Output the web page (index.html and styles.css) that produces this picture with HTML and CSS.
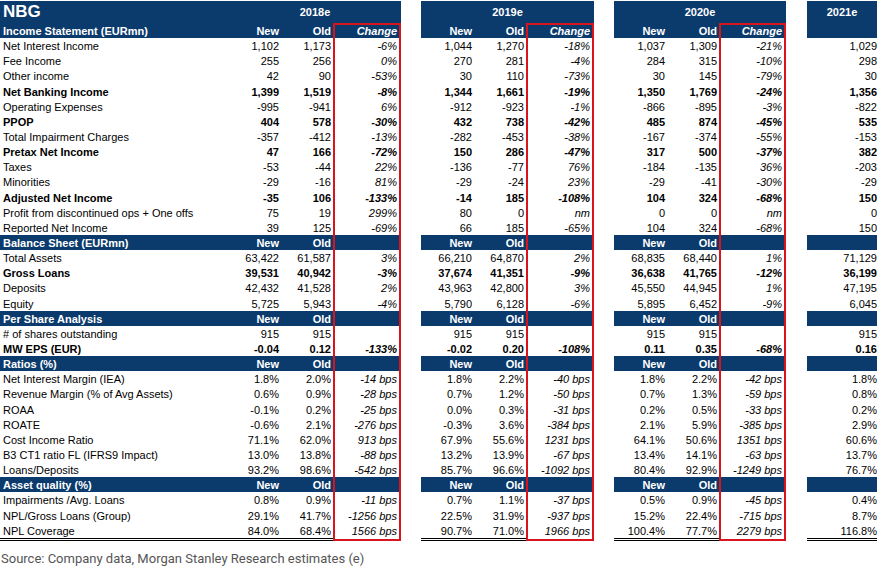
FILE: index.html
```html
<!DOCTYPE html>
<html lang="en">
<head>
<meta charset="utf-8">
<title>NBG estimates</title>
<link rel="stylesheet" href="styles.css">
</head>
<body>
<div class="sheet">
  <div class="row top">
    <div class="c lbl title">NBG</div>
    <div class="c yr s3">2018e</div><div class="gap"></div>
    <div class="c yr s3">2019e</div><div class="gap"></div>
    <div class="c yr s3">2020e</div><div class="gap"></div>
    <div class="c yr">2021e</div>
  </div>
  <div class="row sec first">
    <div class="c lbl">Income Statement (EURmn)</div>
    <div class="c">New</div><div class="c">Old</div><div class="c chg">Change</div><div class="gap"></div>
    <div class="c">New</div><div class="c">Old</div><div class="c chg">Change</div><div class="gap"></div>
    <div class="c">New</div><div class="c">Old</div><div class="c chg">Change</div><div class="gap"></div>
    <div class="c"></div>
  </div>
  <div class="row"><div class="c lbl">Net Interest Income</div><div class="c">1,102</div><div class="c">1,173</div><div class="c chg">-6%</div><div class="gap"></div><div class="c">1,044</div><div class="c">1,270</div><div class="c chg">-18%</div><div class="gap"></div><div class="c">1,037</div><div class="c">1,309</div><div class="c chg">-21%</div><div class="gap"></div><div class="c">1,029</div></div>
  <div class="row"><div class="c lbl">Fee Income</div><div class="c">255</div><div class="c">256</div><div class="c chg">0%</div><div class="gap"></div><div class="c">270</div><div class="c">281</div><div class="c chg">-4%</div><div class="gap"></div><div class="c">284</div><div class="c">315</div><div class="c chg">-10%</div><div class="gap"></div><div class="c">298</div></div>
  <div class="row"><div class="c lbl">Other income</div><div class="c">42</div><div class="c">90</div><div class="c chg">-53%</div><div class="gap"></div><div class="c">30</div><div class="c">110</div><div class="c chg">-73%</div><div class="gap"></div><div class="c">30</div><div class="c">145</div><div class="c chg">-79%</div><div class="gap"></div><div class="c">30</div></div>
  <div class="row b"><div class="c lbl">Net Banking Income</div><div class="c">1,399</div><div class="c">1,519</div><div class="c chg">-8%</div><div class="gap"></div><div class="c">1,344</div><div class="c">1,661</div><div class="c chg">-19%</div><div class="gap"></div><div class="c">1,350</div><div class="c">1,769</div><div class="c chg">-24%</div><div class="gap"></div><div class="c">1,356</div></div>
  <div class="row"><div class="c lbl">Operating Expenses</div><div class="c">-995</div><div class="c">-941</div><div class="c chg">6%</div><div class="gap"></div><div class="c">-912</div><div class="c">-923</div><div class="c chg">-1%</div><div class="gap"></div><div class="c">-866</div><div class="c">-895</div><div class="c chg">-3%</div><div class="gap"></div><div class="c">-822</div></div>
  <div class="row b"><div class="c lbl">PPOP</div><div class="c">404</div><div class="c">578</div><div class="c chg">-30%</div><div class="gap"></div><div class="c">432</div><div class="c">738</div><div class="c chg">-42%</div><div class="gap"></div><div class="c">485</div><div class="c">874</div><div class="c chg">-45%</div><div class="gap"></div><div class="c">535</div></div>
  <div class="row"><div class="c lbl">Total Impairment Charges</div><div class="c">-357</div><div class="c">-412</div><div class="c chg">-13%</div><div class="gap"></div><div class="c">-282</div><div class="c">-453</div><div class="c chg">-38%</div><div class="gap"></div><div class="c">-167</div><div class="c">-374</div><div class="c chg">-55%</div><div class="gap"></div><div class="c">-153</div></div>
  <div class="row b"><div class="c lbl">Pretax Net Income</div><div class="c">47</div><div class="c">166</div><div class="c chg">-72%</div><div class="gap"></div><div class="c">150</div><div class="c">286</div><div class="c chg">-47%</div><div class="gap"></div><div class="c">317</div><div class="c">500</div><div class="c chg">-37%</div><div class="gap"></div><div class="c">382</div></div>
  <div class="row"><div class="c lbl">Taxes</div><div class="c">-53</div><div class="c">-44</div><div class="c chg">22%</div><div class="gap"></div><div class="c">-136</div><div class="c">-77</div><div class="c chg">76%</div><div class="gap"></div><div class="c">-184</div><div class="c">-135</div><div class="c chg">36%</div><div class="gap"></div><div class="c">-203</div></div>
  <div class="row"><div class="c lbl">Minorities</div><div class="c">-29</div><div class="c">-16</div><div class="c chg">81%</div><div class="gap"></div><div class="c">-29</div><div class="c">-24</div><div class="c chg">23%</div><div class="gap"></div><div class="c">-29</div><div class="c">-41</div><div class="c chg">-30%</div><div class="gap"></div><div class="c">-29</div></div>
  <div class="row b"><div class="c lbl">Adjusted Net Income</div><div class="c">-35</div><div class="c">106</div><div class="c chg">-133%</div><div class="gap"></div><div class="c">-14</div><div class="c">185</div><div class="c chg">-108%</div><div class="gap"></div><div class="c">104</div><div class="c">324</div><div class="c chg">-68%</div><div class="gap"></div><div class="c">150</div></div>
  <div class="row"><div class="c lbl">Profit from discontinued ops + One offs</div><div class="c">75</div><div class="c">19</div><div class="c chg">299%</div><div class="gap"></div><div class="c">80</div><div class="c">0</div><div class="c chg">nm</div><div class="gap"></div><div class="c">0</div><div class="c">0</div><div class="c chg">nm</div><div class="gap"></div><div class="c">0</div></div>
  <div class="row"><div class="c lbl">Reported Net Income</div><div class="c">39</div><div class="c">125</div><div class="c chg">-69%</div><div class="gap"></div><div class="c">66</div><div class="c">185</div><div class="c chg">-65%</div><div class="gap"></div><div class="c">104</div><div class="c">324</div><div class="c chg">-68%</div><div class="gap"></div><div class="c">150</div></div>

  <div class="row sec">
    <div class="c lbl">Balance Sheet (EURmn)</div>
    <div class="c">New</div><div class="c">Old</div><div class="c chg"></div><div class="gap"></div>
    <div class="c">New</div><div class="c">Old</div><div class="c chg"></div><div class="gap"></div>
    <div class="c">New</div><div class="c">Old</div><div class="c chg"></div><div class="gap"></div>
    <div class="c"></div>
  </div>
  <div class="row"><div class="c lbl">Total Assets</div><div class="c">63,422</div><div class="c">61,587</div><div class="c chg">3%</div><div class="gap"></div><div class="c">66,210</div><div class="c">64,870</div><div class="c chg">2%</div><div class="gap"></div><div class="c">68,835</div><div class="c">68,440</div><div class="c chg">1%</div><div class="gap"></div><div class="c">71,129</div></div>
  <div class="row b"><div class="c lbl">Gross Loans</div><div class="c">39,531</div><div class="c">40,942</div><div class="c chg">-3%</div><div class="gap"></div><div class="c">37,674</div><div class="c">41,351</div><div class="c chg">-9%</div><div class="gap"></div><div class="c">36,638</div><div class="c">41,765</div><div class="c chg">-12%</div><div class="gap"></div><div class="c">36,199</div></div>
  <div class="row"><div class="c lbl">Deposits</div><div class="c">42,432</div><div class="c">41,528</div><div class="c chg">2%</div><div class="gap"></div><div class="c">43,963</div><div class="c">42,800</div><div class="c chg">3%</div><div class="gap"></div><div class="c">45,550</div><div class="c">44,945</div><div class="c chg">1%</div><div class="gap"></div><div class="c">47,195</div></div>
  <div class="row"><div class="c lbl">Equity</div><div class="c">5,725</div><div class="c">5,943</div><div class="c chg">-4%</div><div class="gap"></div><div class="c">5,790</div><div class="c">6,128</div><div class="c chg">-6%</div><div class="gap"></div><div class="c">5,895</div><div class="c">6,452</div><div class="c chg">-9%</div><div class="gap"></div><div class="c">6,045</div></div>

  <div class="row sec">
    <div class="c lbl">Per Share Analysis</div>
    <div class="c">New</div><div class="c">Old</div><div class="c chg"></div><div class="gap"></div>
    <div class="c">New</div><div class="c">Old</div><div class="c chg"></div><div class="gap"></div>
    <div class="c">New</div><div class="c">Old</div><div class="c chg"></div><div class="gap"></div>
    <div class="c"></div>
  </div>
  <div class="row"><div class="c lbl"># of shares outstanding</div><div class="c">915</div><div class="c">915</div><div class="c chg"></div><div class="gap"></div><div class="c">915</div><div class="c">915</div><div class="c chg"></div><div class="gap"></div><div class="c">915</div><div class="c">915</div><div class="c chg"></div><div class="gap"></div><div class="c">915</div></div>
  <div class="row b"><div class="c lbl">MW EPS (EUR)</div><div class="c">-0.04</div><div class="c">0.12</div><div class="c chg">-133%</div><div class="gap"></div><div class="c">-0.02</div><div class="c">0.20</div><div class="c chg">-108%</div><div class="gap"></div><div class="c">0.11</div><div class="c">0.35</div><div class="c chg">-68%</div><div class="gap"></div><div class="c">0.16</div></div>

  <div class="row sec">
    <div class="c lbl">Ratios (%)</div>
    <div class="c">New</div><div class="c">Old</div><div class="c chg"></div><div class="gap"></div>
    <div class="c">New</div><div class="c">Old</div><div class="c chg"></div><div class="gap"></div>
    <div class="c">New</div><div class="c">Old</div><div class="c chg"></div><div class="gap"></div>
    <div class="c"></div>
  </div>
  <div class="row"><div class="c lbl">Net Interest Margin (IEA)</div><div class="c">1.8%</div><div class="c">2.0%</div><div class="c chg">-14 bps</div><div class="gap"></div><div class="c">1.8%</div><div class="c">2.2%</div><div class="c chg">-40 bps</div><div class="gap"></div><div class="c">1.8%</div><div class="c">2.2%</div><div class="c chg">-42 bps</div><div class="gap"></div><div class="c">1.8%</div></div>
  <div class="row"><div class="c lbl">Revenue Margin (% of Avg Assets)</div><div class="c">0.6%</div><div class="c">0.9%</div><div class="c chg">-28 bps</div><div class="gap"></div><div class="c">0.7%</div><div class="c">1.2%</div><div class="c chg">-50 bps</div><div class="gap"></div><div class="c">0.7%</div><div class="c">1.3%</div><div class="c chg">-59 bps</div><div class="gap"></div><div class="c">0.8%</div></div>
  <div class="row"><div class="c lbl">ROAA</div><div class="c">-0.1%</div><div class="c">0.2%</div><div class="c chg">-25 bps</div><div class="gap"></div><div class="c">0.0%</div><div class="c">0.3%</div><div class="c chg">-31 bps</div><div class="gap"></div><div class="c">0.2%</div><div class="c">0.5%</div><div class="c chg">-33 bps</div><div class="gap"></div><div class="c">0.2%</div></div>
  <div class="row"><div class="c lbl">ROATE</div><div class="c">-0.6%</div><div class="c">2.1%</div><div class="c chg">-276 bps</div><div class="gap"></div><div class="c">-0.3%</div><div class="c">3.6%</div><div class="c chg">-384 bps</div><div class="gap"></div><div class="c">2.1%</div><div class="c">5.9%</div><div class="c chg">-385 bps</div><div class="gap"></div><div class="c">2.9%</div></div>
  <div class="row"><div class="c lbl">Cost Income Ratio</div><div class="c">71.1%</div><div class="c">62.0%</div><div class="c chg">913 bps</div><div class="gap"></div><div class="c">67.9%</div><div class="c">55.6%</div><div class="c chg">1231 bps</div><div class="gap"></div><div class="c">64.1%</div><div class="c">50.6%</div><div class="c chg">1351 bps</div><div class="gap"></div><div class="c">60.6%</div></div>
  <div class="row"><div class="c lbl">B3 CT1 ratio FL (IFRS9 Impact)</div><div class="c">13.0%</div><div class="c">13.8%</div><div class="c chg">-88 bps</div><div class="gap"></div><div class="c">13.2%</div><div class="c">13.9%</div><div class="c chg">-67 bps</div><div class="gap"></div><div class="c">13.4%</div><div class="c">14.1%</div><div class="c chg">-63 bps</div><div class="gap"></div><div class="c">13.7%</div></div>
  <div class="row"><div class="c lbl">Loans/Deposits</div><div class="c">93.2%</div><div class="c">98.6%</div><div class="c chg">-542 bps</div><div class="gap"></div><div class="c">85.7%</div><div class="c">96.6%</div><div class="c chg">-1092 bps</div><div class="gap"></div><div class="c">80.4%</div><div class="c">92.9%</div><div class="c chg">-1249 bps</div><div class="gap"></div><div class="c">76.7%</div></div>

  <div class="row sec">
    <div class="c lbl">Asset quality (%)</div>
    <div class="c">New</div><div class="c">Old</div><div class="c chg"></div><div class="gap"></div>
    <div class="c">New</div><div class="c">Old</div><div class="c chg"></div><div class="gap"></div>
    <div class="c">New</div><div class="c">Old</div><div class="c chg"></div><div class="gap"></div>
    <div class="c"></div>
  </div>
  <div class="row"><div class="c lbl">Impairments /Avg. Loans</div><div class="c">0.8%</div><div class="c">0.9%</div><div class="c chg">-11 bps</div><div class="gap"></div><div class="c">0.7%</div><div class="c">1.1%</div><div class="c chg">-37 bps</div><div class="gap"></div><div class="c">0.5%</div><div class="c">0.9%</div><div class="c chg">-45 bps</div><div class="gap"></div><div class="c">0.4%</div></div>
  <div class="row"><div class="c lbl">NPL/Gross Loans (Group)</div><div class="c">29.1%</div><div class="c">41.7%</div><div class="c chg">-1256 bps</div><div class="gap"></div><div class="c">22.5%</div><div class="c">31.9%</div><div class="c chg">-937 bps</div><div class="gap"></div><div class="c">15.2%</div><div class="c">22.4%</div><div class="c chg">-715 bps</div><div class="gap"></div><div class="c">8.7%</div></div>
  <div class="row last"><div class="c lbl">NPL Coverage</div><div class="c">84.0%</div><div class="c">68.4%</div><div class="c chg">1566 bps</div><div class="gap"></div><div class="c">90.7%</div><div class="c">71.0%</div><div class="c chg">1966 bps</div><div class="gap"></div><div class="c">100.4%</div><div class="c">77.7%</div><div class="c chg">2279 bps</div><div class="gap"></div><div class="c">116.8%</div></div>
</div>
<p class="source">Source: Company data, Morgan Stanley Research estimates (e)</p>
</body>
</html>
```

FILE: styles.css
```css
* { box-sizing: border-box; }

html, body {
  margin: 0;
  padding: 0;
  background: #fff;
  overflow: hidden;
}

body {
  font-family: "Liberation Sans", Arial, sans-serif;
  font-size: 11px;
  color: #000;
}

.sheet {
  display: flex;
  flex-direction: column;
  padding-top: 1px;
}

.row {
  display: grid;
  grid-template-columns: 229px 52px 52px 68px 20px 53px 52px 68px 20px 53px 52px 67px 21px 70px;
  height: 15.15px;
  line-height: 15.15px;
  padding-top: 0;
}

.c {
  text-align: right;
  padding-right: 2px;
  white-space: nowrap;
  overflow: hidden;
  padding-top: 1px;
}

.c:last-child { padding-right: 0; }

.lbl {
  text-align: left;
  padding-left: 3px;
  padding-right: 0;
}

.chg {
  font-style: italic;
  padding-right: 4px;
  box-shadow: inset 2px 0 #d8141c, inset -2px 0 #d8141c;
}

.b { font-weight: bold; }

/* header rows */
.top {
  height: 22px;
  line-height: 22px;
}

.top .c,
.sec .c {
  background: #0b3a6c;
  color: #fff;
  font-weight: bold;
}

.top .c { padding-top: 0; }

.title {
  font-size: 17px;
  line-height: 22px;
}

.yr {
  text-align: center;
  padding-right: 0;
}

.s3 { grid-column: span 3; }

.first .chg {
  box-shadow: inset 2px 0 #d8141c, inset -2px 0 #d8141c, inset 0 2px #d8141c;
}

/* closing row with double rule */
.last { height: 18.15px; }

.last .c {
  border-bottom: 3px double #000;
}

.last .chg {
  border-bottom: 0;
  box-shadow: inset 2px 0 #d8141c, inset -2px 0 #d8141c, inset 0 -2px #d8141c;
}

.source {
  margin: 10px 0 0 1px;
  font-family: Roboto, "Liberation Sans", sans-serif;
  font-size: 13px;
  line-height: 16px;
  color: #555;
}
```
